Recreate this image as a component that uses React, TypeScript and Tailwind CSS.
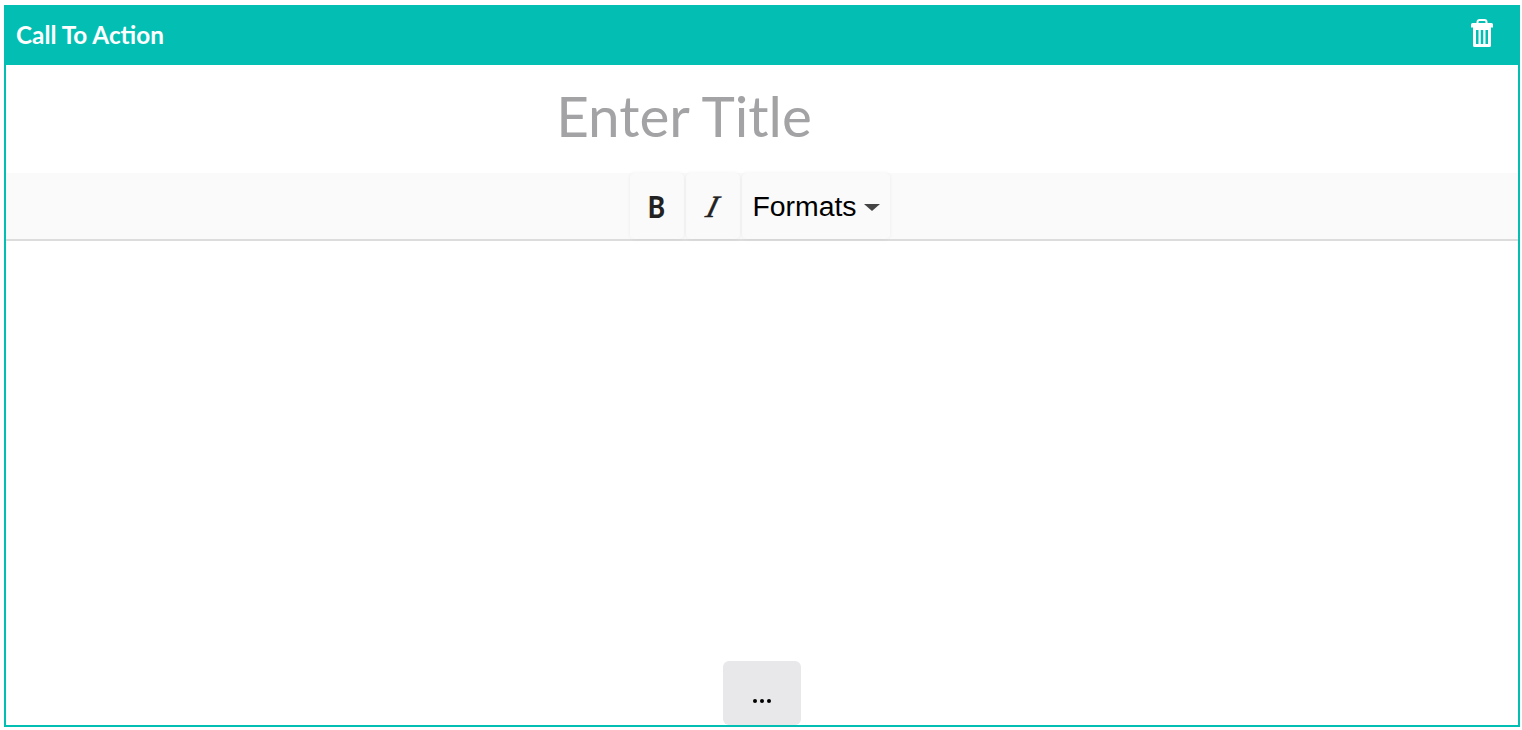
export default function App() {
  return (
    <div className="h-[730px] w-full bg-white pt-[5px] pl-[4px] pr-[2px] pb-[3px] font-['Lato',sans-serif]">
      <div className="flex h-full flex-col border-2 border-t-0 border-[#03bfb3]">
        <div className="-mx-[2px] flex h-[60px] shrink-0 items-center justify-between bg-[#03bfb3] pl-[12px] pr-[27px]">
          <span className="text-[24.3px] font-bold leading-none text-white">Call To Action</span>
          <svg className="mb-[4px]" width="22" height="28" viewBox="0 0 22 28" aria-hidden="true">
            <path d="M6.500 5V3C6.500 1.600 7.500 1 8.500 1h5c1 0 2 .6 2 2v2" fill="none" stroke="#fff" strokeWidth="2" />
            <path d="M1.500 4h19A1.500 1.500 0 0 1 22 5.500V8.500H0V5.500A1.500 1.500 0 0 1 1.500 4z" fill="#fff" />
            <path d="M2 8h18v18.500a1.500 1.500 0 0 1-1.500 1.500h-15A1.500 1.500 0 0 1 2 26.500z" fill="#fff" />
            <path d="M5 11h2.500v14H5zM9.750 11h2.500v14h-2.500zM14.500 11H17v14h-2.500z" fill="#03bfb3" />
          </svg>
        </div>
        <div className="flex h-[108px] shrink-0 items-center justify-center pr-[156px] pb-[7px]">
          <span className="text-[56.6px] leading-none text-[#a3a3a5]">Enter Title</span>
        </div>
        <div className="flex h-[68px] shrink-0 justify-center gap-[2px] border-b-2 border-[#dcdcdc] bg-[#fafafa] pr-[4px]">
          <div className="flex w-[54px] items-center justify-center rounded-[5px] pr-[2px] shadow-[0_0_4px_rgba(0,0,0,0.06)]">
            <span className="inline-block origin-center scale-x-[0.84] text-[31px] font-black leading-none text-[#222]">B</span>
          </div>
          <div className="flex w-[54px] items-center justify-center rounded-[5px] shadow-[0_0_4px_rgba(0,0,0,0.06)]">
            <span className="inline-block -skew-x-[24deg] font-['Liberation_Serif',serif] text-[31px] leading-none text-[#222] [-webkit-text-stroke:0.5px_#222]">I</span>
          </div>
          <div className="flex w-[148px] items-center justify-center gap-[7px] rounded-[5px] shadow-[0_0_4px_rgba(0,0,0,0.06)]">
            <span className="font-['Liberation_Sans',sans-serif] text-[28.4px] leading-none text-black">Formats</span>
            <span className="mt-[3px] h-0 w-0 border-x-[8px] border-t-[7px] border-x-transparent border-t-[#444]" />
          </div>
        </div>
        <div className="flex flex-1 items-end justify-center">
          <div className="flex h-[64px] w-[78px] items-center justify-center rounded-[6px] bg-[#e8e8ea] pt-[16px]">
            <span className="flex gap-[3px]">
              <i className="h-[4px] w-[4px] rounded-full bg-black" />
              <i className="h-[4px] w-[4px] rounded-full bg-black" />
              <i className="h-[4px] w-[4px] rounded-full bg-black" />
            </span>
          </div>
        </div>
      </div>
    </div>
  );
}
